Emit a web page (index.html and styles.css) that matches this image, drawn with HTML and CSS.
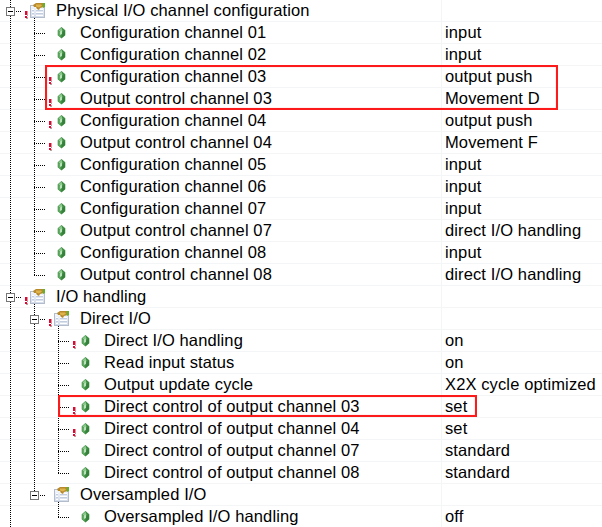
FILE: index.html
```
<!DOCTYPE html>
<html lang="en">
<head>
<meta charset="utf-8">
<title>I/O configuration</title>
<link rel="stylesheet" href="styles.css">
</head>
<body>
<svg class="defs" width="0" height="0">
  <defs>
    <linearGradient id="sheet" x1="0" y1="0" x2="0" y2="1"><stop offset="0" stop-color="#f4f7fc"/><stop offset="1" stop-color="#d3dbe9"/></linearGradient>
    <symbol id="expander" viewBox="0 0 24 22">
      <rect x="6.500" y="7.500" width="8" height="8" fill="#fff" stroke="#777"/>
      <path d="M8 11.500h5" stroke="#000"/>
    </symbol>
    <symbol id="folder" viewBox="0 0 24 22">
      <rect x="6.500" y="5.500" width="14" height="12" fill="url(#sheet)" stroke="#b3bccd"/>
      <path d="M8 9.500h2M12 9.500h7M8 12.500h2M12 12.500h7M8 15.500h2M12 15.500h7" stroke="#fff"/>
      <path d="M8 10.500h2M12 10.500h7M8 13.500h2M12 13.500h7" stroke="#c3cde0"/>
      <path d="M9 5l3-2h8v4l-4 1-1 2-2-1-1-2-2 0z" fill="#b98a2c"/>
      <path d="M12 4.500h5l1 1-3 2-3-1z" fill="#dfb44d"/>
      <path d="M19 3h2v4l-2 1z" fill="#58b52d"/>
    </symbol>
    <symbol id="gem" viewBox="0 0 24 22">
      <path d="M13.500 5l3.800 3.200v5l-3.800 3.300-3.800-3.300v-5z" fill="#3f8f43"/>
      <path d="M13.500 5.500l-3.200 3 2.200 1.500 2-1z" fill="#8cc88c"/>
      <path d="M10.300 8.800l2.200 1.400v5l-2.200-2.200z" fill="#64ab66"/>
      <path d="M12 9.500l2-1v3.500l-2 1z" fill="#b9e2b8"/>
      <path d="M14.500 10.500l2.500-2v4.500l-3 2.500z" fill="#35803a"/>
    </symbol>
    <symbol id="alert" viewBox="0 0 24 22">
      <path d="M3 11h1v5h-1zM3 17h1v2h-2v-1h1z" fill="#b9a5a0"/>
      <path d="M1 11h2v4h-2zM1 16h2v2h-2z" fill="#f00032"/>
    </symbol>
  </defs>
</svg>
<main class="tree" id="tree"></main>
<script src="tree.js"></script>
</body>
</html>
```
FILE: styles.css
```
* { box-sizing: border-box; }
body {
  margin: 0;
  width: 602px;
  height: 527px;
  overflow: hidden;
  background: #fff;
  color: #000;
  font: 16.5px/20px "Liberation Sans", Arial, sans-serif;
  letter-spacing: 0.12px;
}
.defs { display: block; }
.tree { position: relative; }
.row {
  display: grid;
  grid-template-columns: 441px 1fr;
  height: 22px;
}
.name, .value {
  display: flex;
  height: 22px;
  white-space: pre;
  border-bottom: 1px solid #f4f5f7;
}
.value {
  border-left: 1px solid #f4f5f7;
  padding-left: 3px;
}
.cell { flex: none; width: 24px; height: 22px; }
.line { stroke: #000; stroke-dasharray: 1 1; }
.label { margin-left: 8px; }
.mark {
  position: absolute;
  border: 2px solid #fd1a1a;
  box-shadow: inset 0 0 1px #ff7070;
}
.mark-channel { left: 45px; top: 65px; width: 513px; height: 45px; }
.mark-direct { left: 58px; top: 395px; width: 419px; height: 22px; }
```
FILE: tree.js
```
// One letter per 24px level: v = line, t = branch, l = last branch, s = space,
// m = expander on a continuing line, z = expander that ends its line.
const rows = [
  ["m", "folder", 1, "Physical I/O channel configuration", ""],
  ["vt", "gem", 0, "Configuration channel 01", "input"],
  ["vt", "gem", 0, "Configuration channel 02", "input"],
  ["vt", "gem", 1, "Configuration channel 03", "output push"],
  ["vt", "gem", 1, "Output control channel 03", "Movement D"],
  ["vt", "gem", 1, "Configuration channel 04", "output push"],
  ["vt", "gem", 1, "Output control channel 04", "Movement F"],
  ["vt", "gem", 0, "Configuration channel 05", "input"],
  ["vt", "gem", 0, "Configuration channel 06", "input"],
  ["vt", "gem", 0, "Configuration channel 07", "input"],
  ["vt", "gem", 0, "Output control channel 07", "direct I/O handling"],
  ["vt", "gem", 0, "Configuration channel 08", "input"],
  ["vl", "gem", 0, "Output control channel 08", "direct I/O handling"],
  ["m", "folder", 1, "I/O handling", ""],
  ["vm", "folder", 1, "Direct I/O", ""],
  ["vvt", "gem", 1, "Direct I/O handling", "on"],
  ["vvt", "gem", 0, "Read input status", "on"],
  ["vvt", "gem", 0, "Output update cycle", "X2X cycle optimized"],
  ["vvt", "gem", 1, "Direct control of output channel 03", "set"],
  ["vvt", "gem", 1, "Direct control of output channel 04", "set"],
  ["vvt", "gem", 0, "Direct control of output channel 07", "standard"],
  ["vvl", "gem", 0, "Direct control of output channel 08", "standard"],
  ["vz", "folder", 0, "Oversampled I/O", ""],
  ["vsl", "gem", 0, "Oversampled I/O handling", "off"]
];
const cell = body => `<svg class="cell" viewBox="0 0 24 22">${body}</svg>`;
const line = d => `<path class="line" d="${d}"/>`;
const across = line("M10 11.500h12");
const guides = {
  s: "",
  v: line("M10.500 0v22"),
  t: line("M10.500 0v22") + across,
  l: line("M10.500 0v12") + across,
  m: line("M10.500 0v22") + across + '<use href="#expander"/>',
  z: line("M10.500 0v12") + across + '<use href="#expander"/>'
};
document.getElementById("tree").innerHTML = rows.map(([g, icon, alert, name, value]) => {
  const icons = (icon === "folder" ? line("M10.500 18v4") : "") +
    `<use href="#${icon}"/>` + (alert ? '<use href="#alert"/>' : "");
  return `<div class="row"><div class="name">${[...g].map(k => cell(guides[k])).join("")}${cell(icons)}<span class="label">${name}</span></div><div class="value">${value}</div></div>`;
}).join("") + '<div class="mark mark-channel"></div><div class="mark mark-direct"></div>';
```
